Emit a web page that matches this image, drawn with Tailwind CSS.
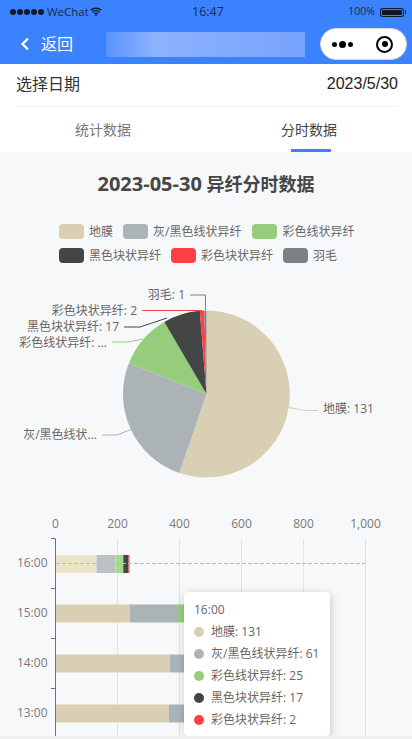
<!doctype html>
<html>
<head>
  <meta charset="UTF-8">
  <meta name="viewport" content="width=device-width, initial-scale=1.0">
  <script src="https://cdn.jsdelivr.net/npm/@tailwindcss/browser@4"></script>
</head>
<body class="bg-[#f7f8fa] font-['Open_Sans','Noto_Sans_CJK_SC',sans-serif]">
  <div class="relative h-[739px] w-[412px] overflow-hidden">
    <!-- status + nav -->
    <div class="h-16 bg-[#3b82ff]">
      <div class="relative flex h-6 items-center justify-between pl-[10px] pr-[6px] text-[#1d2a44]">
        <div class="flex items-center gap-[1px]">
          <span class="h-[6px] w-[6px] rounded-full bg-[#10182c]"></span>
          <span class="h-[6px] w-[6px] rounded-full bg-[#10182c]"></span>
          <span class="h-[6px] w-[6px] rounded-full bg-[#10182c]"></span>
          <span class="h-[6px] w-[6px] rounded-full bg-[#10182c]"></span>
          <span class="h-[6px] w-[6px] rounded-full bg-[#10182c]"></span>
          <span class="ml-[2px] text-[11.5px]">WeChat</span>
          <svg width="12" height="10" viewBox="0 0 12 10" fill="none" stroke="#10182c" stroke-width="1.4"><path d="M.6 3.3a8 8 0 0 1 10.8 0M2.4 5.2a5.4 5.4 0 0 1 7.2 0M4.2 7a2.7 2.700 0 0 1 3.600 0"/><path d="M6 9.600 4.900 8.200a1.700 1.700 0 0 1 2.200 0z" fill="#10182c" stroke="none"/></svg>
        </div>
        <span class="absolute left-[192px] text-[12.5px]">16:47</span>
        <div class="flex items-center gap-[5px]">
          <span class="text-[10.5px]">100%</span>
          <div class="flex items-center gap-[1px]">
            <span class="h-[9px] w-6 rounded-[2px] border border-[#10182c] bg-[#10182c] outline-1 outline-[#3b82ff] -outline-offset-2"></span>
            <span class="h-1 w-[1px] bg-[#10182c]"></span>
          </div>
        </div>
      </div>
      <div class="flex h-10 items-center pl-5">
        <svg width="10" height="14" viewBox="0 0 10 14" fill="none" stroke="#fff" stroke-width="2.200"><path d="M8 1.500 2.500 7 8 12.500"/></svg>
        <span class="ml-[11px] text-base text-white">返回</span>
        <div class="ml-[33px] h-[25px] w-[199px] bg-[linear-gradient(90deg,#5a93fd,#8db2fe_25%,#80a9fd_70%,#77a3fd)]"></div>
        <div class="ml-[15px] flex h-8 w-[87px] items-center rounded-full border border-[#d8d8d8] bg-white">
          <div class="flex w-[38px] items-center justify-center gap-[2px] pl-1">
            <span class="h-[5px] w-[5px] rounded-full bg-black"></span>
            <span class="h-[7px] w-[7px] rounded-full bg-black"></span>
            <span class="h-[5px] w-[5px] rounded-full bg-black"></span>
          </div>
          <div class="ml-[17px] flex h-[17px] w-[17px] items-center justify-center rounded-full border-[2.5px] border-black">
            <span class="h-[6px] w-[6px] rounded-full bg-black"></span>
          </div>
        </div>
      </div>
    </div>

    <!-- date row + tabs -->
    <div class="h-[88px] bg-white">
      <div class="ml-4 mr-[14px] flex h-[43px] items-center justify-between border-b border-[#f2f3f5] pb-[2px] text-base text-[#333]">
        <span>选择日期</span>
        <span class="font-['Liberation_Sans'] text-[#222]">2023/5/30</span>
      </div>
      <div class="grid grid-cols-2 text-sm">
        <div class="flex h-[45px] items-center justify-center text-[#777]">统计数据</div>
        <div class="relative flex h-[45px] items-center justify-center text-[#444]">
          分时数据
          <span class="absolute bottom-0 left-[85px] h-[3px] w-10 bg-[#3b82ff]"></span>
        </div>
      </div>
    </div>

    <!-- heading + legend -->
    <h1 class="pt-[12px] text-center text-lg leading-[40px] font-bold text-[#464646]"><span class="text-xl">2023-05-30</span> 异纤分时数据</h1>
    <div class="mt-5 flex flex-col gap-[9px] pl-[59px] text-xs leading-[15px] text-[#666]">
      <div class="flex items-center">
        <span class="h-[15px] w-[25px] rounded-[4px] bg-[#d9cfb5]"></span><span class="ml-[5px]">地膜</span>
        <span class="ml-[10px] h-[15px] w-[25px] rounded-[4px] bg-[#abb3b6]"></span><span class="ml-[5px]">灰/黑色线状异纤</span>
        <span class="ml-[11px] h-[15px] w-[25px] rounded-[4px] bg-[#96cd7c]"></span><span class="ml-[5px]">彩色线状异纤</span>
      </div>
      <div class="flex items-center">
        <span class="h-[15px] w-[25px] rounded-[4px] bg-[#444545]"></span><span class="ml-[5px]">黑色块状异纤</span>
        <span class="ml-[10px] h-[15px] w-[25px] rounded-[4px] bg-[#fd4043]"></span><span class="ml-[5px]">彩色块状异纤</span>
        <span class="ml-[10px] h-[15px] w-[25px] rounded-[4px] bg-[#7c8283]"></span><span class="ml-[5px]">羽毛</span>
      </div>
    </div>

    <!-- pie chart -->
    <svg class="absolute left-0 top-[280px]" width="412" height="220" viewBox="0 280 412 220" font-size="12" fill="#666">
      <path d="M206.500 394V310.500A83.500 83.500 0 1 1 179.300 473Z" fill="#d9cfb5"/>
      <path d="M206.500 394 179.300 473A83.500 83.500 0 0 1 128.900 363.200Z" fill="#abb3b6"/>
      <path d="M206.500 394 128.900 363.200A83.500 83.500 0 0 1 164.300 322Z" fill="#96cd7c"/>
      <path d="M206.500 394 164.300 322A83.500 83.500 0 0 1 199.800 310.800Z" fill="#444545"/>
      <path d="M206.500 394 199.800 310.800A83.500 83.500 0 0 1 204.300 310.500Z" fill="#fd4043"/>
      <path d="M206.500 394 204.300 310.500A83.500 83.500 0 0 1 206.500 310.500Z" fill="#7c8283"/>
      <g fill="none" stroke-width="1">
        <path d="M289 407.500 304 410.500H318" stroke="#d9cfb5"/>
        <path d="M132 429 117 435H102" stroke="#abb3b6"/>
        <path d="M143 339 128 342H112" stroke="#96cd7c"/>
        <path d="M167 318 140 327H124" stroke="#444545"/>
        <path d="M202 310.500H142" stroke="#fd4043"/>
        <path d="M205.500 310V295H190" stroke="#7c8283"/>
      </g>
      <text x="323" y="413">地膜: 131</text>
      <text x="97" y="439" text-anchor="end">灰/黑色线状...</text>
      <text x="107" y="346.500" text-anchor="end">彩色线状异纤: ...</text>
      <text x="119" y="330.500" text-anchor="end">黑色块状异纤: 17</text>
      <text x="137" y="314.500" text-anchor="end">彩色块状异纤: 2</text>
      <text x="185" y="298.500" text-anchor="end">羽毛: 1</text>
    </svg>

    <!-- stacked bars -->
    <svg class="absolute left-0 top-[505px]" width="412" height="234" viewBox="0 505 412 234" font-size="12" fill="#7a7a7a">
      <g stroke="#e0e3ec">
        <path d="M117.500 539V736M179.500 539V736M241.500 539V736M303.500 539V736M365.500 539V736"/>
      </g>
      <g text-anchor="middle">
        <text x="55.500" y="528">0</text>
        <text x="117.500" y="528">200</text>
        <text x="179.500" y="528">400</text>
        <text x="241.500" y="528">600</text>
        <text x="303.500" y="528">800</text>
        <text x="365.500" y="528">1,000</text>
      </g>
      <g text-anchor="end">
        <text x="47.500" y="567">16:00</text>
        <text x="47.500" y="617">15:00</text>
        <text x="47.500" y="667">14:00</text>
        <text x="47.500" y="717">13:00</text>
      </g>
      <g stroke="#6e7079">
        <path d="M55.500 538.500V736"/>
        <path d="M51 538.500H55M51 588.500H55M51 638.500H55M51 688.500H55"/>
      </g>
      <!-- 16:00 is highlighted -->
      <rect x="56" y="555" width="40.500" height="18" fill="#ede3c9"/>
      <rect x="96.500" y="555" width="19" height="18" fill="#bac2c5"/>
      <rect x="115.500" y="555" width="7.800" height="18" fill="#a5dc89"/>
      <rect x="123.300" y="555" width="5.200" height="18" fill="#444545"/>
      <rect x="128.500" y="555" width="1" height="18" fill="#fd4043"/>
      <!-- 15:00 -->
      <rect x="56" y="604.500" width="74" height="18" fill="#d9cfb5"/>
      <rect x="130" y="604.500" width="48" height="18" fill="#abb3b6"/>
      <rect x="178" y="604.500" width="12" height="18" fill="#96cd7c"/>
      <!-- 14:00 -->
      <rect x="56" y="654.500" width="114" height="18" fill="#d9cfb5"/>
      <rect x="170" y="654.500" width="20" height="18" fill="#abb3b6"/>
      <!-- 13:00 -->
      <rect x="56" y="704.500" width="113" height="18" fill="#d9cfb5"/>
      <rect x="169" y="704.500" width="21" height="18" fill="#abb3b6"/>
      <path d="M56 563.500H365" stroke="#b5b8c6" stroke-dasharray="4 2"/>
    </svg>

    <!-- tooltip -->
    <div class="absolute left-[184px] top-[592px] h-[144px] w-[146px] rounded-[4px] bg-white pt-[6.5px] pl-[10px] text-xs text-[#666] shadow-[1px_2px_10px_rgba(0,0,0,0.2)]">
      <div class="h-[22px] leading-[22px]">16:00</div>
      <div class="flex h-[22px] items-center"><span class="h-[10px] w-[10px] rounded-full bg-[#d9cfb5]"></span><span class="ml-[7px]">地膜: 131</span></div>
      <div class="flex h-[22px] items-center"><span class="h-[10px] w-[10px] rounded-full bg-[#abb3b6]"></span><span class="ml-[7px]">灰/黑色线状异纤: 61</span></div>
      <div class="flex h-[22px] items-center"><span class="h-[10px] w-[10px] rounded-full bg-[#96cd7c]"></span><span class="ml-[7px]">彩色线状异纤: 25</span></div>
      <div class="flex h-[22px] items-center"><span class="h-[10px] w-[10px] rounded-full bg-[#444545]"></span><span class="ml-[7px]">黑色块状异纤: 17</span></div>
      <div class="flex h-[22px] items-center"><span class="h-[10px] w-[10px] rounded-full bg-[#fd4043]"></span><span class="ml-[7px]">彩色块状异纤: 2</span></div>
    </div>
    <div class="absolute bottom-0 left-0 h-[3px] w-full bg-[#eeeff1]"></div>
  </div>
</body>
</html>
